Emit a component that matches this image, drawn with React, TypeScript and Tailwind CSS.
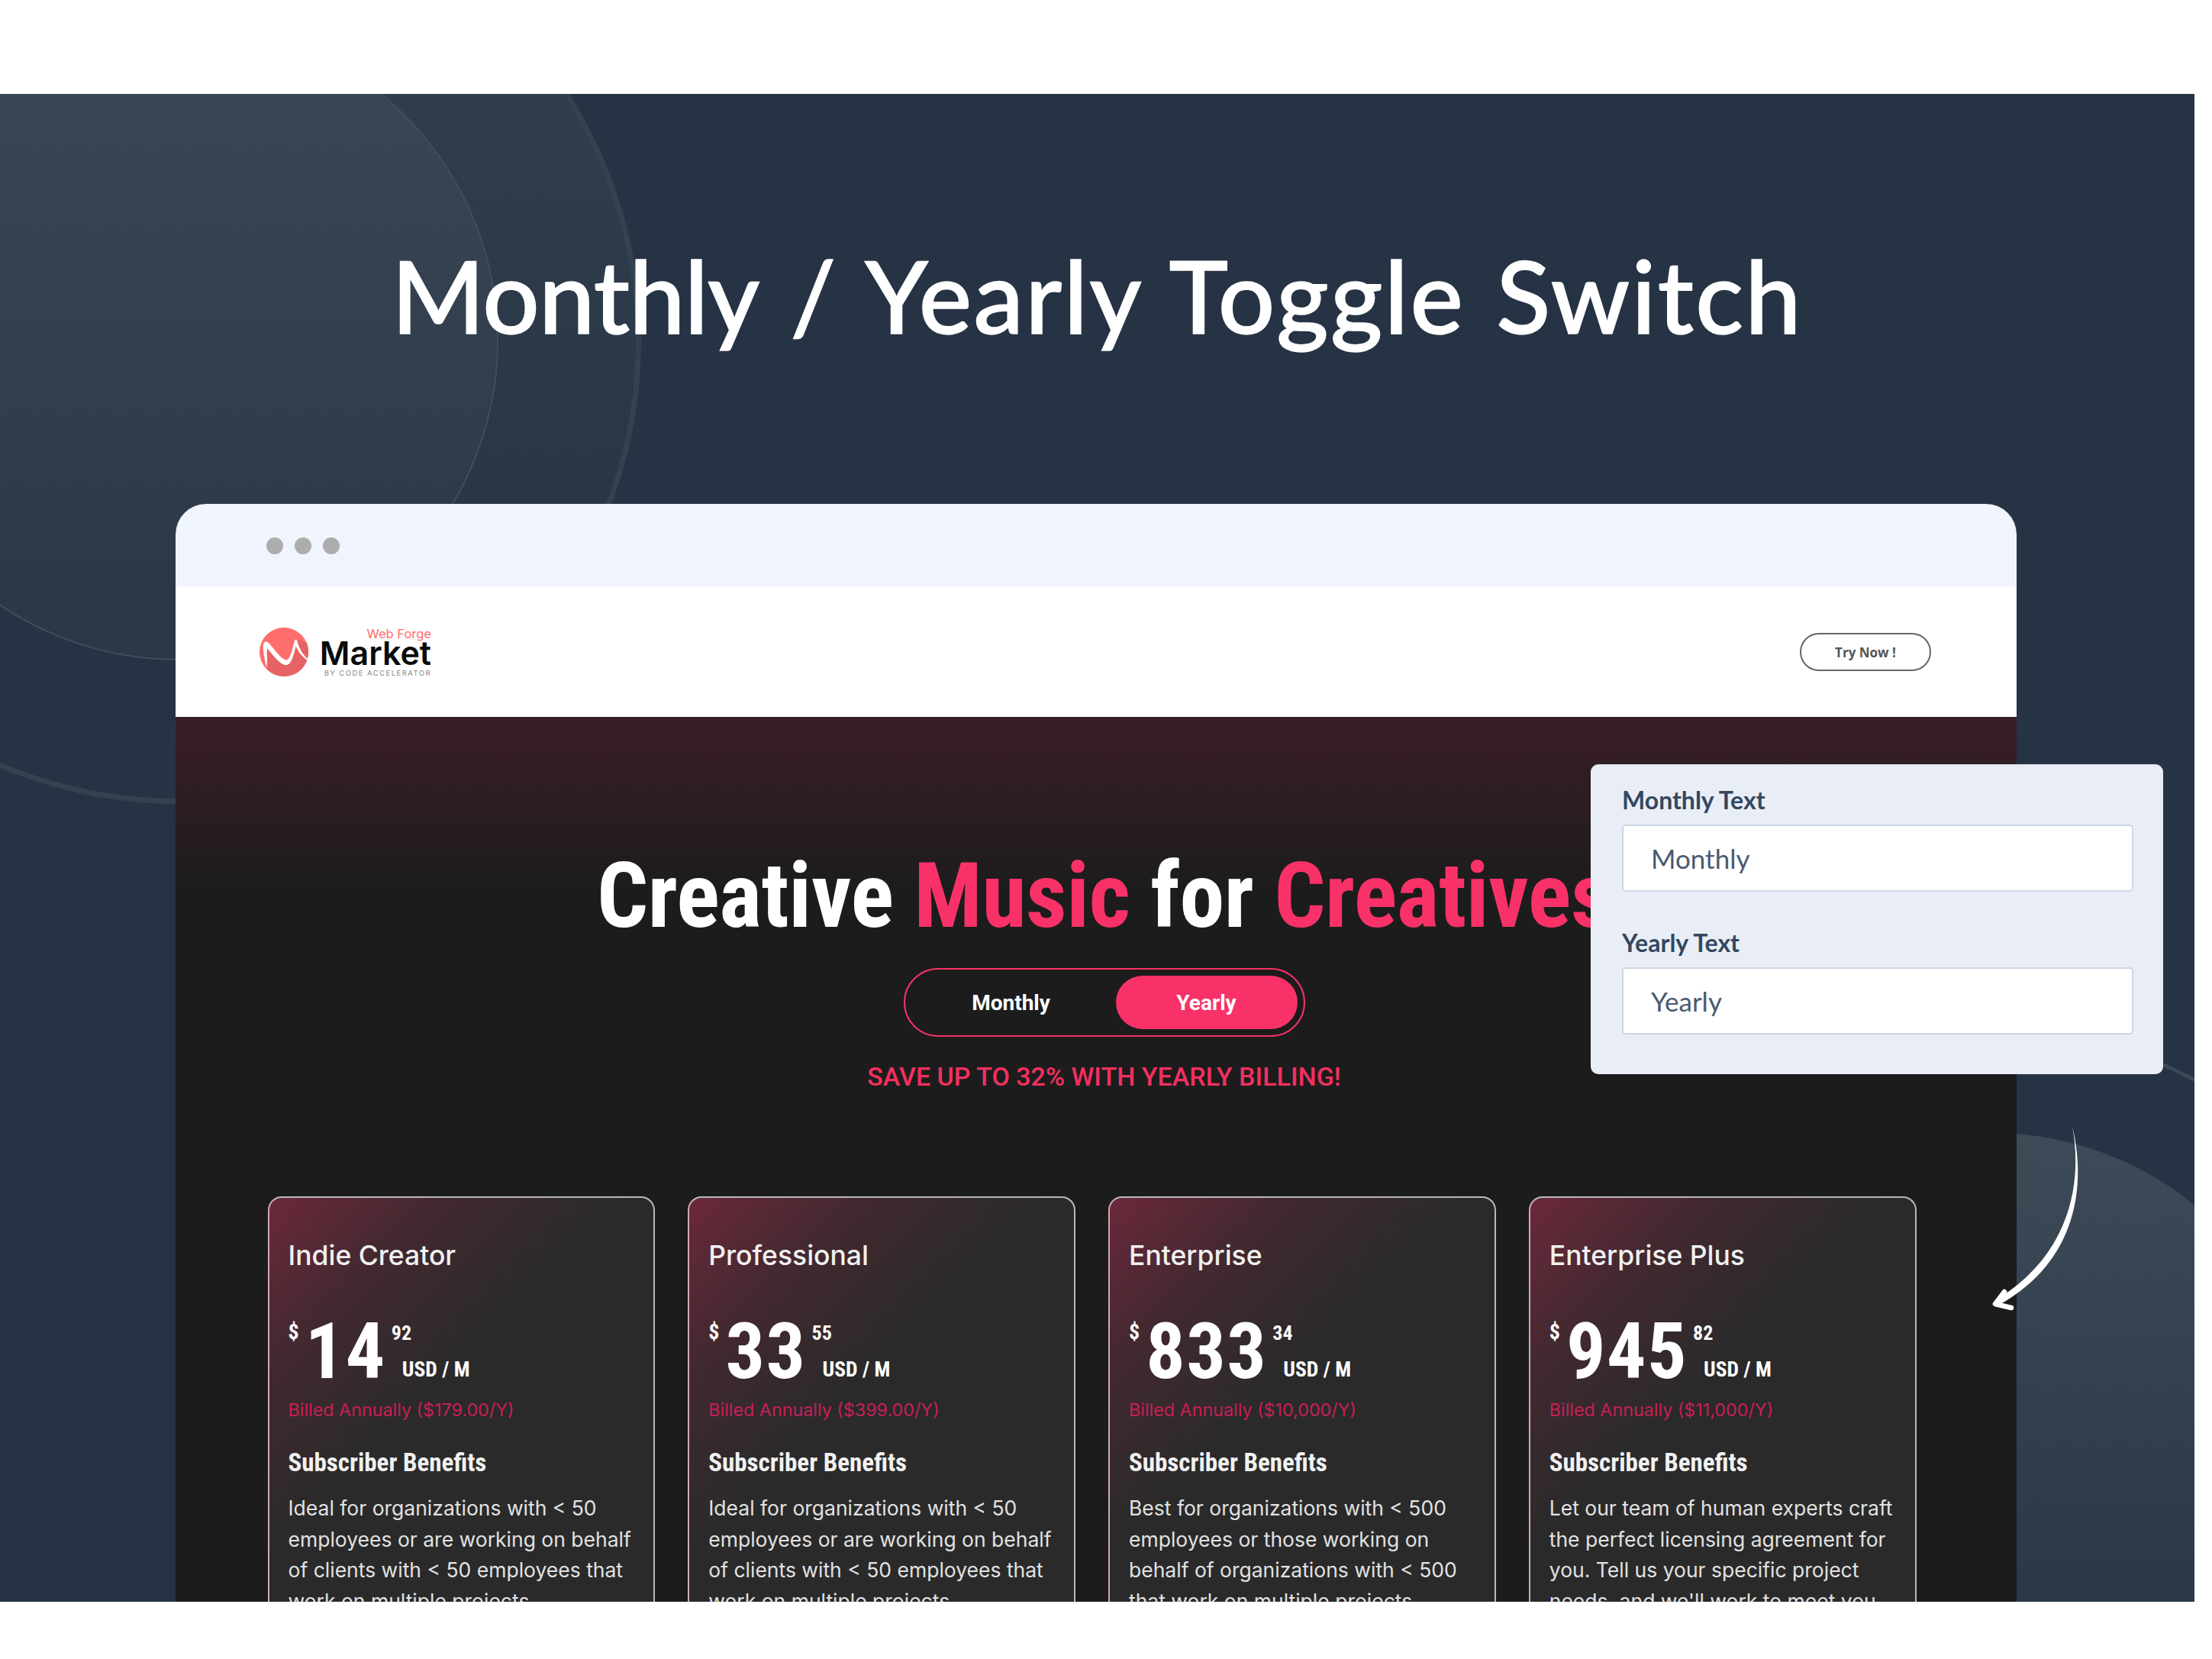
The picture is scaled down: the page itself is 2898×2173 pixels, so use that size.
const plans = [
  { name: 'Indie Creator', whole: '14', cents: '92', billed: 'Billed Annually ($179.00/Y)', text: 'Ideal for organizations with < 50 employees or are working on behalf of clients with < 50 employees that work on multiple projects.' },
  { name: 'Professional', whole: '33', cents: '55', billed: 'Billed Annually ($399.00/Y)', text: 'Ideal for organizations with < 50 employees or are working on behalf of clients with < 50 employees that work on multiple projects.' },
  { name: 'Enterprise', whole: '833', cents: '34', billed: 'Billed Annually ($10,000/Y)', text: 'Best for organizations with < 500 employees or those working on behalf of organizations with < 500 that work on multiple projects.' },
  { name: 'Enterprise Plus', whole: '945', cents: '82', billed: 'Billed Annually ($11,000/Y)', text: "Let our team of human experts craft the perfect licensing agreement for you. Tell us your specific project needs, and we'll work to meet you." },
];

const condensed = "font-['Roboto',sans-serif] [font-stretch:75%]";

function LogoMark() {
  return (
    <svg width="64" height="64" viewBox="0 0 64 64" className="shrink-0">
      <circle cx="32" cy="32" r="32" fill="#ff6d6d" />
      <path d="M11 55C17 61 24 64 32 64C50 64 64 50 64 32C64 28 63.500 24 62 20L52 16C48 26 44 50 34 48C26 46 16 32 10 26Z" fill="#e66363" />
      <path d="M9 52C7 42 4 30 5 22C6 17 10 18 13 21C20 29 28 41 35 42.500C40 43 43 28 46 17C47 15 48 15 49 17C51 25 56 35 63 41L63 43C55 38 50 30 47.500 24C45 35 42 50 34 49C26 48 16 34 10 27C9 33 11 44 9 52Z" fill="#fff" />
    </svg>
  );
}

function Logo() {
  return (
    <div className="flex items-center gap-[19px]">
      <LogoMark />
      <div className="flex w-[142px] flex-col items-end font-['Inter',sans-serif]">
        <span className="mt-[3px] h-[14px] text-[16.500px] leading-[14px] text-[#ff6d6d]">Web Forge</span>
        <span className="h-[36px] whitespace-nowrap text-[43px] font-semibold leading-[36px] text-[#0b0b0b]">Market</span>
        <span className="mt-[4px] h-[10px] whitespace-nowrap text-[9.500px] leading-[10px] tracking-[1.450px] text-[#8a8285]">BY CODE ACCELERATOR</span>
      </div>
    </div>
  );
}

function PlanCard({ name, whole, cents, billed, text }: (typeof plans)[number]) {
  return (
    <div className="h-[560px] rounded-[18px] border-2 border-b-0 border-[#b9b9b9] border-l-[#cfa9b4] bg-[linear-gradient(135deg,#6b283b_0%,#41292f_22%,#2a2a2a_44%)] px-[25px] pt-[52px]">
      <h3 className="font-['Inter',sans-serif] text-[35.500px] font-medium leading-[48px] text-[#f1f1f1]">{name}</h3>
      <div className={`${condensed} mt-[59px] flex h-[82px] items-start font-bold text-white`}>
        <span className="mt-[2px] text-[28px] leading-[30px]">$</span>
        <span className="ml-[8px] text-[102px] leading-[84px] tracking-[1.500px]">{whole}</span>
        <div className="ml-[7px] flex flex-col">
          <span className="mt-[3px] text-[26px] leading-[30px]">{cents}</span>
          <span className="ml-[14px] mt-[18px] whitespace-nowrap text-[27.500px] leading-[30px]">USD / M</span>
        </div>
      </div>
      <p className="mt-[21px] font-['Inter',sans-serif] text-[23.300px] leading-[32px] text-[#c81f56]">{billed}</p>
      <h4 className={`${condensed} mt-[33px] text-[33px] font-bold leading-[40px] text-[#f1f1f1]`}>Subscriber Benefits</h4>
      <p className="mt-[19px] font-['Inter',sans-serif] text-[26.500px] leading-[40.600px] text-[#e2e2e2]">{text}</p>
    </div>
  );
}

function TextField({ label, value }: { label: string; value: string }) {
  return (
    <div className="flex flex-col">
      <span className="font-['Lato',sans-serif] text-[32px] font-bold leading-[40px] text-[#34475f]">{label}</span>
      <div className="mt-[12px] flex h-[88px] items-center rounded-[5px] border-2 border-[#ccd6e4] bg-white pl-[36px] font-['Lato',sans-serif] text-[35px] text-[#4a5a70]">{value}</div>
    </div>
  );
}

function CurvedArrow() {
  return (
    <svg width="130" height="250" viewBox="0 0 130 250" className="absolute left-[2605px] top-[1470px]">
      <path d="M110 5C123 75 110 170 13 231L16 238C118 180 128 80 110 5Z" fill="#fff" />
      <path d="M21 222L9 238L30 243" fill="none" stroke="#fff" strokeWidth="6.500" strokeLinecap="round" strokeLinejoin="round" />
    </svg>
  );
}

export default function App() {
  return (
    <div className="relative h-[2173px] w-[2898px] overflow-hidden bg-white">
      <div className="h-[123px]" />
      <section className="relative flex h-[1975px] w-[2875px] flex-col overflow-hidden bg-[#263344]">
        {/* circles behind the heading */}
        <div className="absolute left-[-372px] top-[-282px] h-[1212px] w-[1212px] rounded-full border-[7px] border-[#34424f] bg-[linear-gradient(180deg,#33414f,#263344_85%)]" />
        <div className="absolute left-[-185px] top-[-96px] h-[838px] w-[838px] rounded-full border-2 border-[#3f4d5c] bg-[linear-gradient(180deg,#3b4956,#2a3848_90%)]" />
        <div className="absolute left-[2191px] top-[1361px] h-[838px] w-[838px] rounded-full bg-[linear-gradient(180deg,#3d4a57,#263344_90%)]" />
        <div className="absolute left-[2052px] top-[1222px] h-[1116px] w-[1116px] rounded-full border-[5px] border-[#3a4858]" />

        <h1 className="relative mt-[185px] h-[158px] text-center font-['Lato',sans-serif] text-[131px] font-medium leading-[158px] tracking-[2.400px] text-white [word-spacing:5.500px] [-webkit-text-stroke:1.500px_white]">
          <span className="tracking-[-0.800px]">Monthly</span> / Yearly Toggle Switch
        </h1>

        <div className="relative ml-[230px] mt-[194px] w-[2412px] flex-1 overflow-hidden rounded-t-[40px] bg-[#1c1c1c]">
          <div className="flex h-[108px] items-center gap-[15px] bg-[#f0f4fc] pl-[119px] pt-[2px]">
            <span className="h-[22px] w-[22px] rounded-full bg-[#adadad]" />
            <span className="h-[22px] w-[22px] rounded-full bg-[#adadad]" />
            <span className="h-[22px] w-[22px] rounded-full bg-[#adadad]" />
          </div>
          <div className="flex h-[171px] items-center justify-between bg-white pl-[110px] pr-[112px]">
            <Logo />
            <button className="h-[50px] w-[172px] rounded-full border-2 border-[#666] pt-[2px] font-['Open_Sans',sans-serif] text-[17px] font-bold text-[#555]">Try Now !</button>
          </div>
          <div className="flex flex-col items-center bg-[linear-gradient(180deg,#3a1e26_0px,#1c1c1c_230px)] pl-[21px]">
            <h2 className={`${condensed} mt-[173px] h-[124px] whitespace-nowrap text-[118px] font-bold leading-[124px] tracking-[-0.4px] text-white`}>
              Creative <span className="text-[#f83268]">Music</span> for <span className="text-[#f83268]">Creatives</span>
            </h2>
            <div className="mt-[32px] flex h-[90px] w-[526px] items-center rounded-full border-2 border-[#f83268] p-[8px] font-['Roboto',sans-serif] text-[28px] font-bold text-white">
              <span className="flex-1 pr-[6px] pt-[2px] text-center">Monthly</span>
              <span className="flex h-[70px] w-[238px] items-center justify-center rounded-full bg-[#f83268] pt-[2px]">Yearly</span>
            </div>
            <p className="mt-[32px] h-[40px] font-['Roboto',sans-serif] text-[34px] font-medium leading-[40px] text-[#f2305f]">SAVE UP TO 32% WITH YEARLY BILLING!</p>
            <div className="ml-[-32px] mt-[137px] grid w-[2160px] grid-cols-4 gap-x-[43px]">
              {plans.map((p) => (
                <PlanCard key={p.name} {...p} />
              ))}
            </div>
          </div>
        </div>
      </section>

      <div className="absolute left-[2084px] top-[1001px] flex h-[406px] w-[750px] flex-col gap-[47px] rounded-[10px] border-t-2 border-[#dfe6f0] bg-[#e9eef6] pl-[41px] pr-[39px] pt-[25px]">
        <TextField label="Monthly Text" value="Monthly" />
        <TextField label="Yearly Text" value="Yearly" />
      </div>
      <CurvedArrow />
    </div>
  );
}
